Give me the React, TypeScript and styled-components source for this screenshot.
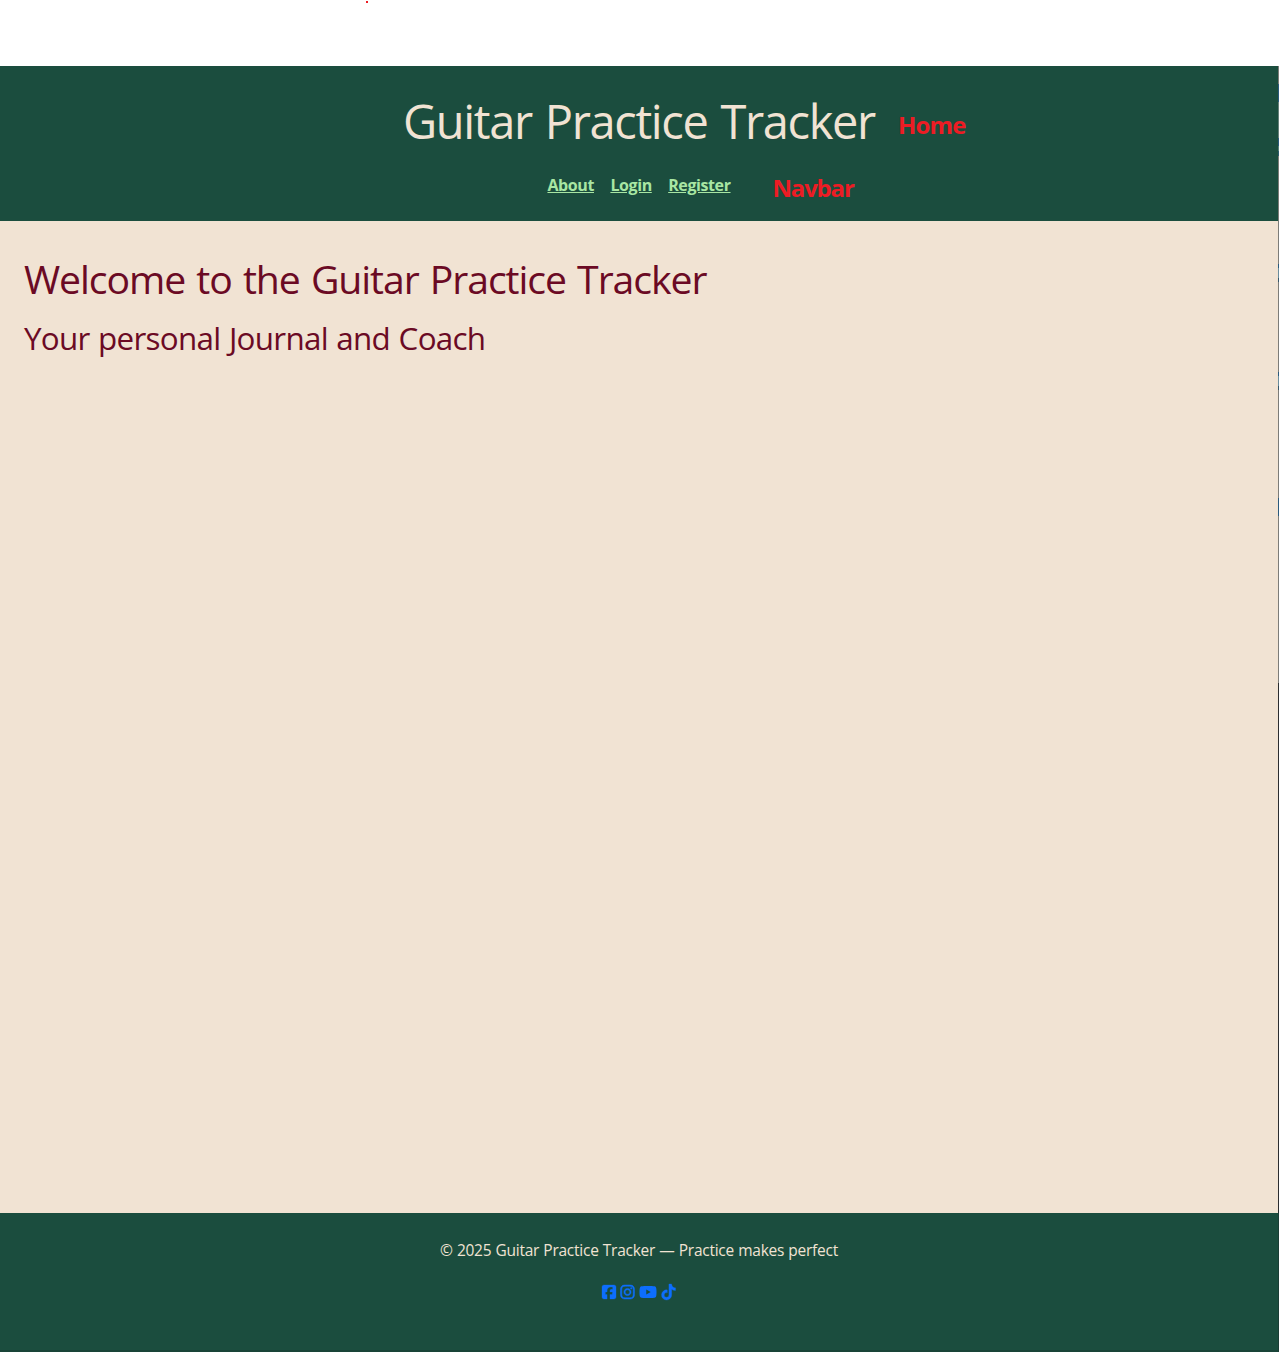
import React from "react";
import styled, { createGlobalStyle } from "styled-components";
import { FaSquareFacebook, FaInstagram, FaYoutube, FaTiktok } from "react-icons/fa6";

const GlobalStyle = createGlobalStyle`
  * { box-sizing: border-box; }
  body { margin: 0; background: #fff; }
  h1, h2, p { margin: 0; font-weight: 400; white-space: nowrap; }
`;

const Page = styled.div`
  display: flex;
  flex-direction: column;
  height: 1352px;
  overflow: hidden;
  font-family: "Open Sans", "Noto Sans", sans-serif;
`;

const TopMargin = styled.div`
  flex: 0 0 66px;
  padding-left: 366px;
`;

const Dot = styled.div`
  width: 2px;
  height: 2px;
  margin-top: 1px;
  background: #ed1c24;
`;

const Window = styled.div`
  flex: 1;
  display: grid;
  grid-template-columns: minmax(0, 1fr) 1px;
`;

const Site = styled.div`
  display: flex;
  flex-direction: column;
  background: #f1e3d3;
`;

const Edge = styled.div`
  background: linear-gradient(
    #7c7c78 0 18px, #2b5a7c 18px 36px, #66807a 36px 72px, #2b5a7c 72px 80px,
    #56807a 80px 85px, #2b5a6c 85px 90px, #7c7c78 90px 198px, #2b5a7c 198px 202px,
    #6a8d9c 202px 212px, #35566a 212px 216px, #7c7c78 216px 306px, #2b5a7c 306px 310px,
    #6a8d9c 310px 320px, #35566a 320px 324px, #7c7c78 324px 432px, #2b5a7c 432px 450px,
    #7c7c78 450px 617px, #2b2d2f 617px 1147px, #1b3d35 1147px
  );
`;

const Header = styled.header`
  height: 155px;
  padding-top: 24px;
  background: #1b4d3e;
`;

const TitleRow = styled.div`
  display: grid;
  grid-template-columns: 1fr auto 1fr;
  height: 64px;
  align-items: center;
`;

const Title = styled.h1`
  grid-column: 2;
  color: #f1e3d3;
  font-size: 47px;
  line-height: 62px;
  padding-bottom: 2px;
  letter-spacing: -1.35px;
  word-spacing: 2px;
`;

const NavRow = styled.div`
  display: grid;
  grid-template-columns: 1fr auto 1fr;
  height: 24px;
  margin-top: 14px;
  align-items: center;
`;

const Nav = styled.nav`
  grid-column: 2;
  display: flex;
  gap: 16.4px;
`;

const NavLink = styled.a`
  color: #a8e6a3;
  font-size: 16px;
  font-weight: 700;
  line-height: 24px;
  letter-spacing: -0.4px;
  text-decoration: underline;
`;

const Note = styled.span<{ $gap: number; $drop: number; $tracking: number }>`
  margin-left: ${(p) => p.$gap}px;
  padding-top: ${(p) => p.$drop}px;
  color: #ed1c24;
  font-size: 24px;
  font-weight: 700;
  line-height: 28px;
  letter-spacing: ${(p) => p.$tracking}px;
`;

const Main = styled.main`
  flex: 1;
  padding: 34px 24px;
  color: #6b0a24;
`;

const Welcome = styled.h1`
  font-size: 39.2px;
  line-height: 48px;
  letter-spacing: -1.08px;
  word-spacing: 2.1px;
`;

const Tagline = styled.h2`
  margin-top: 16px;
  font-size: 31.4px;
  line-height: 38px;
  letter-spacing: -0.73px;
  word-spacing: 1.1px;
`;

const Footer = styled.footer`
  height: 139px;
  padding-top: 25px;
  background: #1b4d3e;
  border-bottom: 2px solid #194438;
  text-align: center;
`;

const Copyright = styled.p`
  color: #f1e3d3;
  font-size: 15.5px;
  line-height: 24px;
  letter-spacing: -0.25px;
  word-spacing: 0.4px;
`;

const Social = styled.div`
  display: flex;
  justify-content: center;
  gap: 4px;
  margin-top: 22px;
  padding-right: 1px;
  color: #0d6efd;
`;

const SocialLink = styled.a<{ $w: number; $stroke?: number }>`
  display: flex;
  justify-content: center;
  width: ${(p) => p.$w}px;
  svg {
    flex: none;
    width: ${(p) => p.$w}px;
    height: 16px;
    overflow: visible;
    stroke-width: ${(p) => p.$stroke ?? 0};
  }
`;

export default function App() {
  return (
    <>
      <GlobalStyle />
      <Page>
        <TopMargin><Dot /></TopMargin>
        <Window>
          <Site>
            <Header>
              <TitleRow>
                <Title>Guitar Practice Tracker</Title>
                <Note $gap={23} $drop={6} $tracking={-0.8}>Home</Note>
              </TitleRow>
              <NavRow>
                <Nav>
                  <NavLink>About</NavLink>
                  <NavLink>Login</NavLink>
                  <NavLink>Register</NavLink>
                </Nav>
                <Note $gap={42} $drop={6} $tracking={-1.2}>Navbar</Note>
              </NavRow>
            </Header>
            <Main>
              <Welcome>Welcome to the Guitar Practice Tracker</Welcome>
              <Tagline>Your personal Journal and Coach</Tagline>
            </Main>
            <Footer>
              <Copyright>© 2025 Guitar Practice Tracker — Practice makes perfect</Copyright>
              <Social>
                <SocialLink $w={14} $stroke={10}><FaSquareFacebook /></SocialLink>
                <SocialLink $w={15} $stroke={16}><FaInstagram /></SocialLink>
                <SocialLink $w={18}><FaYoutube /></SocialLink>
                <SocialLink $w={15} $stroke={10}><FaTiktok /></SocialLink>
              </Social>
            </Footer>
          </Site>
          <Edge />
        </Window>
      </Page>
    </>
  );
}
